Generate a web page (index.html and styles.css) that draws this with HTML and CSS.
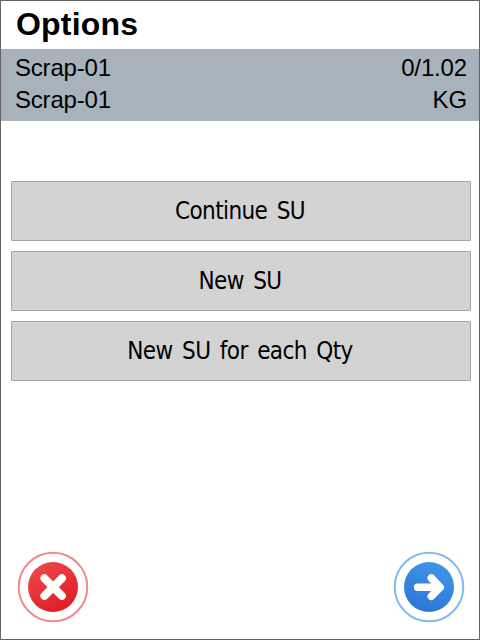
FILE: index.html
```html
<!DOCTYPE html>
<html lang="en">
<head>
<meta charset="utf-8">
<title>Options</title>
<link rel="stylesheet" href="styles.css">
</head>
<body>
<main class="screen">
  <h1 class="title">Options</h1>
  <section class="info">
    <div class="row"><span class="item">Scrap-01</span><span class="quantity">0/1.02</span></div>
    <div class="row"><span class="item">Scrap-01</span><span class="quantity">KG</span></div>
  </section>
  <nav class="actions">
    <button class="action">Continue SU</button>
    <button class="action">New SU</button>
    <button class="action">New SU for each Qty</button>
  </nav>
  <footer class="footer">
    <button class="round" aria-label="Cancel">
      <svg width="72" height="72" viewBox="0 0 72 72">
        <defs><linearGradient id="red" x1="0.2" y1="0" x2="0.8" y2="1"><stop offset="0" stop-color="#ed474d"/><stop offset="1" stop-color="#de1b22"/></linearGradient></defs>
        <circle cx="36" cy="36" r="34.3" fill="#fff" stroke="#ef8b8f" stroke-width="2"/>
        <circle cx="36" cy="36" r="25" fill="url(#red)"/>
        <path d="M27.4 27.3L44.9 44.8M44.9 27.3L27.4 44.8" fill="none" stroke="#fff" stroke-width="8" stroke-linecap="round"/>
      </svg>
    </button>
    <button class="round" aria-label="Next">
      <svg width="72" height="72" viewBox="0 0 72 72">
        <defs><linearGradient id="blue" x1="0.7" y1="0" x2="0.3" y2="1"><stop offset="0" stop-color="#4196e5"/><stop offset="1" stop-color="#2b76d9"/></linearGradient></defs>
        <circle cx="36" cy="36" r="34.3" fill="#fff" stroke="#83bbf0" stroke-width="2"/>
        <circle cx="36" cy="36" r="25" fill="url(#blue)"/>
        <path d="M24.6 36.3H46M38.3 27L47.2 36.3L38.3 45.3" fill="none" stroke="#fff" stroke-width="7.6" stroke-linecap="round" stroke-linejoin="round"/>
      </svg>
    </button>
  </footer>
</main>
</body>
</html>
```
FILE: styles.css
```css
* { box-sizing: border-box; }
body { margin: 0; background: #fff; color: #000; font-family: "Liberation Sans", sans-serif; }
.screen { display: flex; flex-direction: column; width: 480px; height: 640px; border: 1px solid #656263; }
.title { margin: 0; height: 48px; padding-left: 15px; font-size: 32px; line-height: 46px; font-weight: 700; letter-spacing: 0.2px; }
.info { height: 72px; padding: 3px 12px 5px 14px; background: #a8b2ba; font-size: 24px; line-height: 32px; }
.row { display: flex; justify-content: space-between; height: 32px; }
.item { letter-spacing: -0.2px; }
.quantity { letter-spacing: -0.15px; }
.actions { display: flex; flex-direction: column; gap: 10px; margin: 60px 8px 0 10px; }
.action { height: 60px; padding: 0 2px 0 0; border: 1px solid #a5a5a5; border-radius: 1px; background: #d3d3d3; color: #000; font: 24px/56px "DejaVu Sans Condensed", "DejaVu Sans", sans-serif; font-stretch: condensed; letter-spacing: -0.6px; word-spacing: 3.2px; }
.footer { display: flex; justify-content: space-between; margin: auto 14px 16px 16px; }
.round { width: 72px; height: 72px; padding: 0; border: 0; background: none; }
.round svg { display: block; }
```
